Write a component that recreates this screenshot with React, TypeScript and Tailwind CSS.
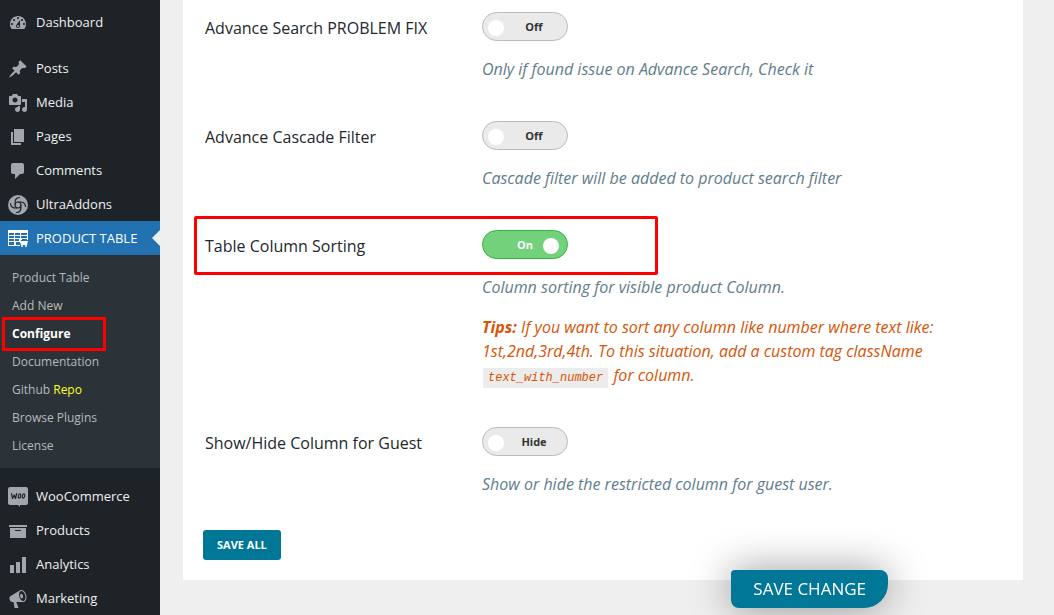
import type { ReactNode } from 'react';
import { clsx } from 'clsx';

interface MenuItem {
  label: string;
  icon: ReactNode;
}

interface ToggleProps {
  id: string;
  offText: string;
  defaultChecked?: boolean;
}

interface SettingRowProps extends ToggleProps {
  label: string;
  description: string;
  highlighted?: boolean;
  children?: ReactNode;
}

const ICONS = {
  dashboard:
    'M3.76 16h12.48c1.1-1.37 1.76-3.11 1.76-5 0-4.42-3.58-8-8-8s-8 3.58-8 8c0 1.89.66 3.63 1.76 5zM10 4c.55 0 1 .45 1 1s-.45 1-1 1-1-.45-1-1 .45-1 1-1zM6 6c.55 0 1 .45 1 1s-.45 1-1 1-1-.45-1-1 .45-1 1-1zm8 0c.55 0 1 .45 1 1s-.45 1-1 1-1-.45-1-1 .45-1 1-1zm-5.37 5.55L12 7v6c0 1.1-.9 2-2 2s-2-.9-2-2c0-.57.24-1.08.63-1.45zM4 10c.55 0 1 .45 1 1s-.45 1-1 1-1-.45-1-1 .45-1 1-1zm12 0c.55 0 1 .45 1 1s-.45 1-1 1-1-.45-1-1 .45-1 1-1zm-5 3c0-.55-.45-1-1-1s-1 .45-1 1 .45 1 1 1 1-.45 1-1z',
  posts:
    'M10.44 3.02l1.82-1.82 6.36 6.35-1.83 1.82c-1.05-.68-2.48-.57-3.41.36l-.75.75c-.92.93-1.04 2.35-.35 3.41l-1.83 1.82-2.41-2.41-2.8 2.79c-.42.42-3.38 2.71-3.8 2.29s1.86-3.39 2.28-3.81l2.79-2.79L4.1 9.36l1.83-1.82c1.05.69 2.48.57 3.4-.36l.75-.75c.93-.92 1.05-2.35.36-3.41z',
  media:
    'M13 11V4c0-.55-.45-1-1-1h-1.67L9 1H5L3.67 3H2c-.55 0-1 .45-1 1v7c0 .55.45 1 1 1h10c.55 0 1-.45 1-1zM7 4.5c1.38 0 2.5 1.12 2.5 2.5S8.38 9.5 7 9.5 4.5 8.38 4.5 7 5.62 4.5 7 4.5zM14 6h5v10.5c0 1.38-1.12 2.5-2.5 2.5S14 17.88 14 16.5s1.12-2.5 2.5-2.5c.17 0 .34.02.5.05V9h-3V6zm-4 8.05V13h2v3.5c0 1.38-1.12 2.5-2.5 2.5S7 17.88 7 16.5 8.12 14 9.5 14c.17 0 .34.02.5.05z',
  pages: 'M6 15V2h10v13H6zm-1 1h8v2H3V5h2v11z',
  comments:
    'M5 2h9c1.1 0 2 .9 2 2v7c0 1.1-.9 2-2 2h-2l-5 5v-5H5c-1.1 0-2-.9-2-2V4c0-1.1.9-2 2-2z',
  products: 'M19 4v2H1V4h18zM2 7h16v10H2V7zm11 3V9H7v1h6z',
  analytics: 'M18 18V2h-4v16h4zm-6 0V7H8v11h4zm-6 0v-8H2v8h4z',
  marketing:
    'M18.15 5.94c.46 1.62.38 3.22-.02 4.48-.42 1.28-1.26 2.18-2.3 2.48-.16.06-.26.06-.4.06-.06.02-.12.02-.18.02-.06.02-.14.02-.22.02h-6.8l2.22 5.5c.02.14-.06.26-.14.34-.08.1-.24.16-.34.16H6.95c-.1 0-.26-.06-.34-.16-.08-.08-.16-.2-.14-.34l-1-5.5H4.25l-.02-.02c-.5.06-1.08-.18-1.54-.62s-.88-1.08-1.06-1.88c-.24-.8-.2-1.56-.02-2.2.18-.62.58-1.08 1.06-1.3l.02-.02 9-5.4c.1-.06.18-.1.24-.16.06-.04.14-.08.24-.12.16-.08.28-.12.5-.18 1.04-.3 2.24.1 3.22.98s1.84 2.24 2.26 3.86zm-2.58 5.98h-.02c.4-.1.74-.34 1.04-.7.58-.7.86-1.76.86-3.04 0-.64-.1-1.3-.28-1.98-.34-1.36-1.02-2.5-1.78-3.24s-1.68-1.1-2.46-.88c-.82.22-1.4.96-1.7 2-.32 1.04-.28 2.36.06 3.72.38 1.36 1 2.5 1.8 3.24.78.74 1.62 1.1 2.48.88zm-2.54-7.08c.22-.04.42-.02.62.04.38.16.76.48 1.02 1s.42 1.2.42 1.78c0 .3-.04.56-.12.8-.18.48-.44.84-.86.94-.34.1-.8-.06-1.14-.4s-.64-.86-.78-1.5c-.18-.62-.12-1.24.02-1.72s.48-.84.82-.94z',
};

const Icon = ({ path }: { path: string }) => (
  <svg viewBox="0 0 20 20" className="size-5 fill-[#a2a7ad]" aria-hidden="true">
    <path d={path} fillRule="evenodd" />
  </svg>
);

const UltraAddonsIcon = () => (
  <svg viewBox="0 0 20 20" className="size-5" fill="none" aria-hidden="true">
    <circle cx="10" cy="10" r="10" fill="#a2a7ad" />
    <g stroke="#1d2327" strokeWidth="1.2" strokeLinecap="round">
      <circle cx="10" cy="10" r="3" />
      <path d="M7.200 9C6.500 5.500 8 2.500 11.500 2.500" />
      <path d="M11 7.200C14.500 6.500 17.500 8 17.500 11.500" />
      <path d="M12.800 11C13.500 14.500 12 17.500 8.500 17.500" />
      <path d="M9 12.800C5.500 13.500 2.500 12 2.500 8.500" />
    </g>
  </svg>
);

const ProductTableIcon = () => (
  <svg viewBox="0 0 20 20" className="size-5" aria-hidden="true">
    <path
      fill="#fff"
      fillRule="evenodd"
      d="M0 1h20v10h-1V10h-5v1h-2v2H8v3h4v1H0V1zm1 3v2h5V4H1zm6 0v2h5V4H7zm6 0v2h6V4h-6zM1 7v2h5V7H1zm6 0v2h5V7H7zm6 0v2h6V7h-6zM1 10v2h5v-2H1zm6 0v2h4v-2H7zm-6 3v3h5v-3H1z"
    />
    <path fill="#fff" d="M11 11h1.500l.5 1h7l-1 4h-6z" />
    <circle cx="14" cy="17" r="1" fill="#fff" />
    <circle cx="18" cy="17" r="1" fill="#fff" />
  </svg>
);

const WooIcon = () => (
  <svg viewBox="0 0 20 20" className="size-5" fill="none" aria-hidden="true">
    <path
      fill="#a2a7ad"
      d="M2 0h16a2 2 0 0 1 2 2v14a2 2 0 0 1-2 2h-6v2l-2-2H2a2 2 0 0 1-2-2V2a2 2 0 0 1 2-2z"
    />
    <g stroke="#1d2327" strokeWidth="1.200" strokeLinejoin="round" strokeLinecap="round">
      <path d="M3.500 6.500l1 5 1.700-3.500L7.500 11.500l1.200-5" />
      <ellipse cx="11.500" cy="9" rx="1.200" ry="2.200" transform="rotate(12 11.500 9)" />
      <ellipse cx="15.500" cy="9" rx="1.200" ry="2.200" transform="rotate(12 15.500 9)" />
    </g>
  </svg>
);

const CONTENT_MENU: MenuItem[] = [
  { label: 'Posts', icon: <Icon path={ICONS.posts} /> },
  { label: 'Media', icon: <Icon path={ICONS.media} /> },
  { label: 'Pages', icon: <Icon path={ICONS.pages} /> },
  { label: 'Comments', icon: <Icon path={ICONS.comments} /> },
  { label: 'UltraAddons', icon: <UltraAddonsIcon /> },
];

const STORE_MENU: MenuItem[] = [
  { label: 'WooCommerce', icon: <WooIcon /> },
  { label: 'Products', icon: <Icon path={ICONS.products} /> },
  { label: 'Analytics', icon: <Icon path={ICONS.analytics} /> },
  { label: 'Marketing', icon: <Icon path={ICONS.marketing} /> },
];

const SUBMENU = [
  'Product Table',
  'Add New',
  'Configure',
  'Documentation',
  'Github Repo',
  'Browse Plugins',
  'License',
];

const MenuLink = ({ label, icon, active }: MenuItem & { active?: boolean }) => (
  <a
    href="#"
    className={clsx(
      'relative flex h-[34px] items-center gap-2 pt-0.5 pl-2 text-[13px] text-[#f0f0f1]',
      active && 'bg-[#2271b1] text-white',
    )}
  >
    {icon}
    <span className="whitespace-nowrap">{label}</span>
    {active && (
      <span className="absolute top-[9px] right-0 border-8 border-l-0 border-transparent border-r-[#efefef]" />
    )}
  </a>
);

const Submenu = () => (
  <ul className="bg-[#2c3338] pt-[9px] pb-2">
    {SUBMENU.map((label) => (
      <li key={label} className="relative">
        <a
          href="#"
          className={clsx(
            'flex h-7 items-center pl-3 text-xs',
            label === 'Configure' ? 'font-bold text-white' : 'text-[#b7babd]',
          )}
        >
          {label === 'Github Repo' ? (
            <span>
              Github <span className="text-[#ffff21]">Repo</span>
            </span>
          ) : (
            label
          )}
        </a>
        {label === 'Configure' && (
          <span className="pointer-events-none absolute -top-[3px] left-[2px] h-[34px] w-[104px] border-[3px] border-[#fe0000]" />
        )}
      </li>
    ))}
  </ul>
);

const Sidebar = () => (
  <nav className="w-40 shrink-0 bg-[#1d2327] pt-[5px]">
    <MenuLink label="Dashboard" icon={<Icon path={ICONS.dashboard} />} />
    <div className="mt-3">
      {CONTENT_MENU.map((item) => (
        <MenuLink key={item.label} {...item} />
      ))}
      <MenuLink label="PRODUCT TABLE" icon={<ProductTableIcon />} active />
      <Submenu />
    </div>
    <div className="mt-[11px]">
      {STORE_MENU.map((item) => (
        <MenuLink key={item.label} {...item} />
      ))}
    </div>
  </nav>
);

const Toggle = ({ id, offText, defaultChecked }: ToggleProps) => (
  <label className="group relative flex h-[29px] w-[86px] cursor-pointer items-center rounded-full border border-[#bbb] bg-[#eaeaea] text-[11px] font-bold text-[#333] has-checked:border-[#2eb839] has-checked:bg-[#73d17b] has-checked:text-white">
    <input
      id={id}
      type="checkbox"
      defaultChecked={defaultChecked}
      className="peer absolute inset-0 size-full cursor-pointer appearance-none"
    />
    <span className="pointer-events-none absolute top-[7px] left-[5px] size-4 rounded-full bg-white peer-checked:left-[60px]" />
    <span className="pointer-events-none w-full pl-[18px] text-center group-has-checked:hidden">
      {offText}
    </span>
    <span className="pointer-events-none hidden w-full text-center group-has-checked:block">
      On
    </span>
  </label>
);

const SettingRow = ({
  id,
  label,
  description,
  highlighted,
  children,
  ...toggle
}: SettingRowProps) => (
  <div className="relative grid grid-cols-[277px_1fr]">
    <label htmlFor={id} className="pt-1 text-base leading-6 text-[#23282d]">
      {label}
    </label>
    <div className="flex flex-col gap-4 text-base leading-6 text-[#607d8b] italic">
      <div className="not-italic">
        <Toggle id={id} {...toggle} />
      </div>
      <p>{description}</p>
      {children}
    </div>
    {highlighted && (
      <span className="pointer-events-none absolute -top-[14px] -left-[11px] h-[59px] w-[464px] rounded-xs border-[3px] border-[#fe0000]" />
    )}
  </div>
);

export default function App() {
  return (
    <div className="flex min-h-screen bg-[#efefef] font-['Open_Sans','Noto_Sans',sans-serif]">
      <Sidebar />
      <main className="min-w-0 flex-1 pr-[31px] pl-[23px]">
        <form className="bg-white px-[22px] pt-3 pb-5">
          <div className="flex flex-col gap-10">
            <SettingRow
              id="advance-search"
              label="Advance Search PROBLEM FIX"
              description="Only if found issue on Advance Search, Check it"
              offText="Off"
            />
            <SettingRow
              id="cascade-filter"
              label="Advance Cascade Filter"
              description="Cascade filter will be added to product search filter"
              offText="Off"
            />
            <SettingRow
              id="column-sorting"
              label="Table Column Sorting"
              description="Column sorting for visible product Column."
              offText="Off"
              defaultChecked
              highlighted
            >
              <p className="max-w-[460px] text-[#d75506]">
                <b>Tips:</b> If you want to sort any column like number where text like:
                1st,2nd,3rd,4th. To this situation, add a custom tag className{' '}
                <code className="mx-px bg-[#ececec] px-[5px] py-[3px] font-['Liberation_Mono',monospace] text-xs">
                  text_with_number
                </code>{' '}
                for column.
              </p>
            </SettingRow>
            <SettingRow
              id="guest-column"
              label="Show/Hide Column for Guest"
              description="Show or hide the restricted column for guest user."
              offText="Hide"
            />
          </div>
          <button
            type="button"
            className="mt-[34px] -ml-0.5 block h-[30px] rounded-[3px] bg-[#007797] px-3.5 text-[11px] font-bold text-white"
          >
            SAVE ALL
          </button>
        </form>
      </main>
      <button
        type="button"
        className="fixed right-[166px] bottom-[7px] h-[38px] rounded-[4px_8px_24px_8px] bg-[#007797] px-[22px] text-[17px] text-white shadow-[0_0_40px_rgba(0,0,0,0.4)]"
      >
        SAVE CHANGE
      </button>
    </div>
  );
}
